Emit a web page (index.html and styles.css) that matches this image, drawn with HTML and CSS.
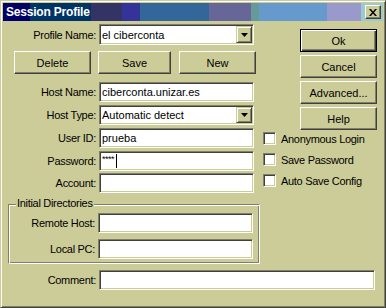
FILE: index.html
```html
<!DOCTYPE html>
<html lang="en">
<head>
    <meta charset="UTF-8">
    <title>Session Profile</title>
    <link rel="stylesheet" href="styles.css">
</head>
<body>
    <div class="window">
        <div class="titlebar">
            <span class="title">Session Profile</span>
            <button class="close">
                <svg width="8" height="7" viewBox="0 0 8 7"><path d="M0 0h2l2 2.5L6 0h2L5 3.5 8 7H6L4 4.5 2 7H0l3-3.5z"/></svg>
            </button>
        </div>
        <div class="content">
            <div class="top">
                <div class="left">
                    <div class="row profile">
                        <span class="label">Profile Name:</span>
                        <div class="field combo">
                            <span class="value">el ciberconta</span>
                            <span class="drop"><svg width="7" height="4" viewBox="0 0 7 4"><path d="M0 0h7L3.5 4z"/></svg></span>
                        </div>
                    </div>
                    <div class="btnrow">
                        <button class="btn delete">Delete</button>
                        <button class="btn save">Save</button>
                        <button class="btn new">New</button>
                    </div>
                    <div class="row host">
                        <span class="label">Host Name:</span>
                        <div class="field"><span class="value">ciberconta.unizar.es</span></div>
                    </div>
                    <div class="row">
                        <span class="label">Host Type:</span>
                        <div class="field combo">
                            <span class="value">Automatic detect</span>
                            <span class="drop"><svg width="7" height="4" viewBox="0 0 7 4"><path d="M0 0h7L3.5 4z"/></svg></span>
                        </div>
                    </div>
                    <div class="row">
                        <span class="label">User ID:</span>
                        <div class="field"><span class="value">prueba</span></div>
                    </div>
                    <div class="row">
                        <span class="label">Password:</span>
                        <div class="field"><span class="stars">****</span><span class="caret"></span></div>
                    </div>
                    <div class="row account">
                        <span class="label">Account:</span>
                        <div class="field"></div>
                    </div>
                </div>
                <div class="right">
                    <button class="btn side default">Ok</button>
                    <button class="btn side">Cancel</button>
                    <button class="btn side">Advanced...</button>
                    <button class="btn side">Help</button>
                    <div class="checks">
                        <div class="check"><span class="box"></span><span>Anonymous Login</span></div>
                        <div class="check"><span class="box"></span><span>Save Password</span></div>
                        <div class="check"><span class="box"></span><span>Auto Save Config</span></div>
                    </div>
                </div>
            </div>
            <div class="group">
                <span class="legend">Initial Directories</span>
                <div class="row">
                    <span class="label">Remote Host:</span>
                    <div class="field"></div>
                </div>
                <div class="row local">
                    <span class="label">Local PC:</span>
                    <div class="field"></div>
                </div>
            </div>
            <div class="row comment">
                <span class="label">Comment:</span>
                <div class="field wide"></div>
            </div>
        </div>
    </div>
</body>
</html>
```

FILE: styles.css
```css
body {
    margin: 0;
    background: #cccc99;
    font-family: "Liberation Sans", Arial, sans-serif;
    font-size: 11px;
    color: #000;
}
.window {
    width: 386px;
    height: 308px;
    box-sizing: border-box;
    border: 1px solid;
    border-color: #cccc99 #404040 #404040 #cccc99;
    box-shadow: inset 1px 1px #fff, inset -1px -1px #808066;
    padding: 2px;
    background: #cccc99;
}
.titlebar {
    height: 18px;
    display: flex;
    align-items: center;
    justify-content: space-between;
    padding: 0 2px 0 3px;
    background: linear-gradient(to right,
        #000066 0 27px, #003366 27px 88px, #333366 88px 119px,
        #333399 119px 137px, #336699 137px 206px, #666699 206px 248px,
        #669999 248px 256px, #6699cc 256px 324px, #9999cc 324px 358px,
        #99cccc 358px);
}
.title {
    color: #fff;
    font-weight: bold;
    font-size: 12px;
    letter-spacing: -0.2px;
}
.close {
    width: 16px;
    height: 14px;
    padding: 0;
    box-sizing: border-box;
    border: 1px solid;
    border-color: #fff #404040 #404040 #fff;
    box-shadow: inset -1px -1px #808066;
    background: #cccc99;
    display: flex;
    align-items: center;
    justify-content: center;
}
.top {
    display: flex;
    margin-top: 3px;
}
.left {
    width: 260px;
}
.row {
    display: flex;
    align-items: center;
    height: 20px;
    margin-top: 3px;
}
.row.profile {
    height: 21px;
    margin-top: 0;
}
.row.host {
    margin-top: 8px;
}
.row.account {
    margin-top: 2px;
}
.label {
    width: 93px;
    margin-right: 3px;
    text-align: right;
    letter-spacing: -0.3px;
    white-space: nowrap;
}
.field {
    width: 155px;
    height: 100%;
    box-sizing: border-box;
    background: #fff;
    border: 1px solid;
    border-color: #808066 #fff #fff #808066;
    box-shadow: inset 1px 1px #404040, inset -1px -1px #cccc99;
    padding: 1px 1px 1px 2px;
    display: flex;
    align-items: center;
    white-space: nowrap;
}
.combo .value {
    flex: 1;
}
.drop {
    width: 16px;
    height: 100%;
    box-sizing: border-box;
    border: 1px solid;
    border-color: #cccc99 #404040 #404040 #cccc99;
    box-shadow: inset 1px 1px #fff, inset -1px -1px #808066;
    background: #cccc99;
    display: flex;
    align-items: center;
    justify-content: center;
}
.stars {
    align-self: flex-start;
    margin-top: 1px;
    font-size: 9px;
    letter-spacing: -0.5px;
}
.caret {
    width: 1px;
    height: 14px;
    background: #000;
    margin-left: 2px;
}
.btnrow {
    display: flex;
    margin: 6px 0 0 11px;
}
.btn {
    height: 23px;
    box-sizing: border-box;
    border: 1px solid;
    border-color: #fff #404040 #404040 #fff;
    box-shadow: inset -1px -1px #808066;
    background: #cccc99;
    font: inherit;
    color: #000;
    padding: 0;
}
.delete, .new {
    width: 77px;
}
.save {
    width: 73px;
    margin: 0 8px 0 7px;
}
.right {
    width: 114px;
    display: flex;
    flex-direction: column;
    align-items: flex-end;
    padding-top: 5px;
    gap: 3px;
}
.side {
    width: 77px;
}
.default {
    border-color: #000;
    box-shadow: inset 1px 1px #fff, inset -1px -1px #404040, inset -2px -2px #808066;
}
.checks {
    align-self: stretch;
    margin-top: -5px;
}
.check {
    display: flex;
    align-items: center;
    height: 21px;
    letter-spacing: -0.3px;
}
.box {
    width: 13px;
    height: 13px;
    box-sizing: border-box;
    background: #fff;
    border: 1px solid;
    border-color: #808066 #fff #fff #808066;
    box-shadow: inset 1px 1px #404040, inset -1px -1px #cccc99;
    margin-right: 5px;
}
.group {
    position: relative;
    width: 252px;
    box-sizing: border-box;
    margin: 11px 0 0 5px;
    padding: 8px 0 4px;
    border: 1px solid;
    border-color: #808066 #fff #fff #808066;
    box-shadow: inset 1px 1px #fff, inset -1px -1px #808066;
}
.group .row:first-of-type {
    margin-top: 0;
}
.group .row.local {
    margin-top: 6px;
}
.group .label {
    width: 86px;
}
.legend {
    position: absolute;
    top: -8px;
    left: 7px;
    padding: 0 1px;
    line-height: 13px;
    background: #cccc99;
    letter-spacing: -0.3px;
}
.row.comment {
    margin-top: 6px;
}
.field.wide {
    width: 276px;
}
```
